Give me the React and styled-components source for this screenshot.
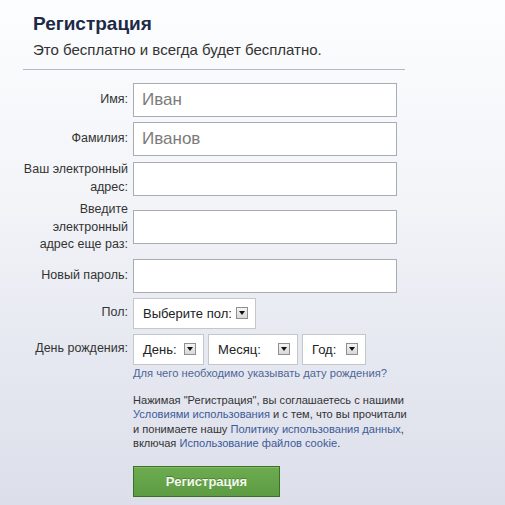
import React from "react";
import styled, { createGlobalStyle } from "styled-components";

const Global = createGlobalStyle`
  html, body { margin: 0; padding: 0; }
  body {
    min-height: 505px;
    background: linear-gradient(180deg, #fcfdfe 0%, #f3f4f8 40%, #e8eaf2 65%, #dcdfea 100%);
    font-family: "Liberation Sans", Arial, sans-serif;
    color: #333;
  }
`;

const Page = styled.div`
  width: 505px;
  min-height: 505px;
  padding-top: 12px;
  box-sizing: border-box;
`;

const Header = styled.header`
  margin-left: 23px;
  width: 382px;
  padding: 0 0 10px 10px;
  box-sizing: border-box;
  border-bottom: 1px solid #b4b9c4;
`;

const Title = styled.h1`
  margin: 0;
  font-size: 19px;
  line-height: 24px;
  font-weight: bold;
  color: #1d2a47;
`;

const Subtitle = styled.p`
  margin: 4px 0 0;
  font-size: 15px;
  line-height: 19px;
  color: #333;
`;

const Form = styled.form`
  display: flex;
  flex-direction: column;
  gap: 5px;
  margin-top: 13px;
`;

const Row = styled.div`
  display: grid;
  grid-template-columns: 128px auto;
  column-gap: 5px;
  align-items: center;
`;

const Label = styled.label`
  text-align: right;
  font-size: 12.5px;
  line-height: 17.5px;
  color: #333;
`;

const TextInput = styled.div`
  width: 264px;
  height: 34px;
  box-sizing: border-box;
  border: 1px solid #a9acb3;
  background: #fff;
  padding-left: 8px;
  display: flex;
  align-items: center;
  font-size: 17px;
  color: #7b7b7b;
`;

const Selects = styled.div`
  display: flex;
  gap: 4px;
`;

const Select = styled.div`
  width: ${(p) => p.$w}px;
  height: 31px;
  box-sizing: border-box;
  border: 1px solid #c4c6cc;
  background: #fff;
  display: flex;
  align-items: center;
  justify-content: space-between;
  padding: 0 7px 0 9px;
  font-size: 13px;
  color: #222;
`;

const Arrow = styled.span`
  width: 12px;
  height: 12px;
  box-sizing: border-box;
  border: 1px solid #8f8f8f;
  background: linear-gradient(180deg, #f4f4f4, #d8d8d8);
  display: flex;
  align-items: center;
  justify-content: center;
  &::after {
    content: "";
    border-left: 3px solid transparent;
    border-right: 3px solid transparent;
    border-top: 4px solid #111;
  }
`;

const Indented = styled.div`
  margin-left: 133px;
`;

const HelpLink = styled.a`
  display: block;
  margin-top: -4px;
  font-size: 11.2px;
  line-height: 14px;
  color: #4f6596;
  text-decoration: none;
`;

const Terms = styled.p`
  margin: 13px 0 0;
  width: 285px;
  font-size: 11.1px;
  line-height: 14.5px;
  color: #333;
`;

const TermsLink = styled.a`
  color: #3b5a98;
  text-decoration: none;
`;

const Button = styled.button`
  display: block;
  margin-top: 15px;
  width: 147px;
  height: 31px;
  box-sizing: border-box;
  border: 1px solid #3d6f25;
  background: linear-gradient(180deg, #6cab50 0%, #5e9c43 100%);
  box-shadow: inset 0 1px 0 #83bd69;
  color: #f3f9ec;
  font-family: "Liberation Sans", Arial, sans-serif;
  font-size: 13px;
  font-weight: bold;
  text-shadow: 0 -1px 0 #4c7f35;
  cursor: pointer;
`;

function Field({ label, value }) {
  return (
    <Row>
      <Label>{label}</Label>
      <TextInput>{value}</TextInput>
    </Row>
  );
}

export default function App() {
  return (
    <Page>
      <Global />
      <Header>
        <Title>Регистрация</Title>
        <Subtitle>Это бесплатно и всегда будет бесплатно.</Subtitle>
      </Header>
      <Form onSubmit={(e) => e.preventDefault()}>
        <Field label="Имя:" value="Иван" />
        <Field label="Фамилия:" value="Иванов" />
        <Field label={<>Ваш электронный<br />адрес:</>} />
        <Field label={<>Введите<br />электронный<br />адрес еще раз:</>} />
        <Field label="Новый пароль:" />
        <Row>
          <Label>Пол:</Label>
          <Selects>
            <Select $w={123}>Выберите пол: <Arrow /></Select>
          </Selects>
        </Row>
        <Row>
          <Label>День рождения:</Label>
          <Selects>
            <Select $w={71}>День: <Arrow /></Select>
            <Select $w={90}>Месяц: <Arrow /></Select>
            <Select $w={64}>Год: <Arrow /></Select>
          </Selects>
        </Row>
        <Indented>
          <HelpLink href="#">Для чего необходимо указывать дату рождения?</HelpLink>
          <Terms>
            Нажимая "Регистрация", вы соглашаетесь с нашими<br />
            <TermsLink href="#">Условиями использования</TermsLink> и с тем, что вы прочитали<br />
            и понимаете нашу <TermsLink href="#">Политику использования данных</TermsLink>,<br />
            включая <TermsLink href="#">Использование файлов cookie</TermsLink>.
          </Terms>
          <Button type="submit">Регистрация</Button>
        </Indented>
      </Form>
    </Page>
  );
}
